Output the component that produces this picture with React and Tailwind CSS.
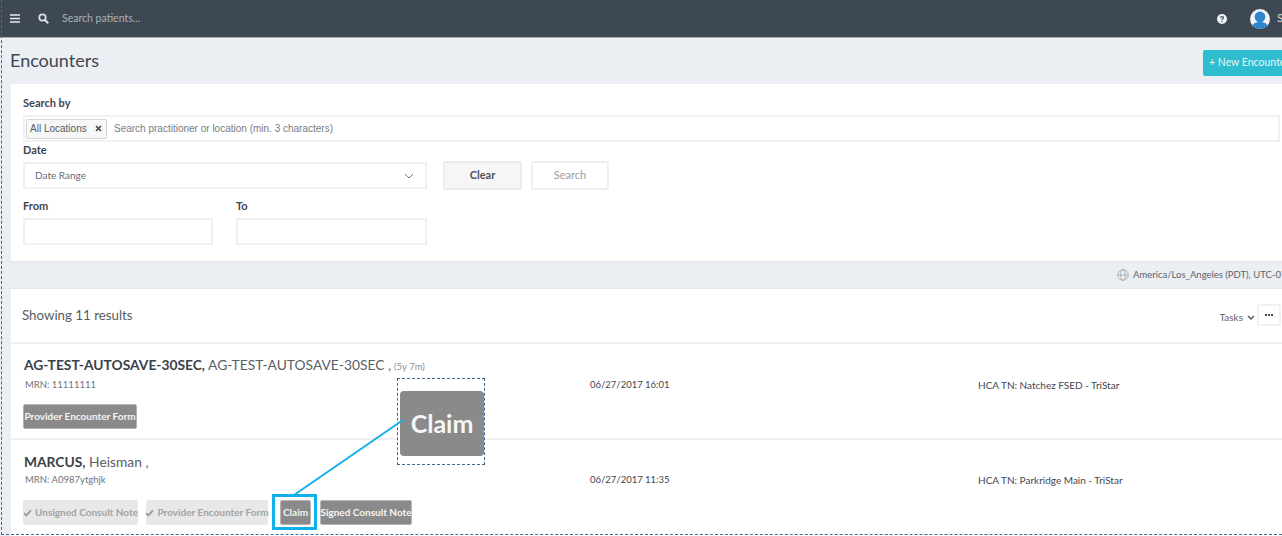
import React from "react";

const F = "font-['Lato','Liberation_Sans',sans-serif]";
const Label = ({ children, cls = "" }) => (
  <div className={`text-[11px] leading-[14px] font-bold text-[#3f4650] ${cls}`}>{children}</div>
);
const Field = ({ cls = "" }) => <div className={`h-[27px] bg-white border-2 border-[#eef0f4] ${cls}`} />;
const Check = () => (
  <svg width="9" height="8" viewBox="0 0 9 8" className="shrink-0">
    <path d="M1 4.2 L3.3 6.4 L8 1.4" fill="none" stroke="#9a9a9a" strokeWidth="1.8" />
  </svg>
);
const Tag = ({ children, cls = "" }) => (
  <div className={`h-[25px] flex items-center justify-center rounded-[2px] bg-[#8a8a8a] border border-[#b5b5b5] text-[#f4f4f4] text-[10px] font-bold whitespace-nowrap ${cls}`}>
    {children}
  </div>
);
const Done = ({ children, cls = "" }) => (
  <div className={`h-[25px] flex items-center justify-center gap-[3px] rounded-[2px] bg-[#e8e8e8] text-[#a3a3a3] text-[10px] font-bold whitespace-nowrap ${cls}`}>
    <Check />
    {children}
  </div>
);

const Row = ({ name, date, loc, mrn, cls, metaCls, children }) => (
  <div className={`border-t-2 border-[#eff0f3] pl-[13px] ${cls}`}>
    <div className="w-[566px]">{name}</div>
    <div className={`flex items-center h-[16px] ${metaCls}`}>
      <div className="w-[566px] shrink-0 pl-[1px] text-[9.5px] text-[#6f757c]">MRN: {mrn}</div>
      <div className="w-[388px] shrink-0 text-[9.5px] text-[#3f4650]">{date}</div>
      <div className="text-[10px] text-[#3f4650] whitespace-nowrap">{loc}</div>
    </div>
    {children}
  </div>
);

export default function App() {
  return (
    <div className={`relative w-[1282px] h-[536px] overflow-hidden bg-[#ebeef3] ${F}`}>
      <header className="h-[38px] bg-[#3e4853] border-b border-[#a9aeb4] flex items-center">
        <svg width="10" height="9" viewBox="0 0 10 9" className="ml-[10px]">
          <path d="M0 1h10M0 4.5h10M0 8h10" stroke="#e8ebee" strokeWidth="1.7" />
        </svg>
        <svg width="11" height="11" viewBox="0 0 11 11" className="ml-[18px]">
          <circle cx="4.5" cy="4.5" r="3.2" fill="none" stroke="#dfe3e7" strokeWidth="1.7" />
          <path d="M7 7l3.2 3.2" stroke="#dfe3e7" strokeWidth="2" />
        </svg>
        <span className="ml-[13px] text-[10.5px] text-[#aab1b8]">Search patients...</span>
        <div className="ml-auto flex items-center">
          <svg width="10" height="10" viewBox="0 0 10 10">
            <circle cx="5" cy="5" r="5" fill="#f1f3f5" />
            <path d="M3.5 3.8C3.6 2.2 6.6 2.3 6.5 3.8 6.4 4.9 5 4.9 5 6" fill="none" stroke="#3e4853" strokeWidth="1.2" />
            <rect x="4.4" y="6.8" width="1.2" height="1.3" fill="#3e4853" />
          </svg>
          <svg width="20" height="20" viewBox="0 0 20 20" className="ml-[23px]">
            <defs>
              <clipPath id="u"><circle cx="10" cy="10" r="10" /></clipPath>
            </defs>
            <circle cx="10" cy="10" r="10" fill="#f2f4f6" />
            <g clipPath="url(#u)">
              <circle cx="10" cy="8" r="5.4" fill="#2f86cf" />
              <path d="M1 20c1-6 5-7 9-7s8 1 9 7z" fill="#2f86cf" />
            </g>
          </svg>
          <span className="ml-[7px] w-[5px] overflow-hidden text-[11px] text-[#d5d9dd]">S</span>
        </div>
      </header>

      <div className="h-[46px] flex items-center justify-between pl-[10px]">
        <h1 className="text-[18px] leading-none mb-[3px] text-[#3f4650]">Encounters</h1>
        <div className="w-[79px] h-[26px] mt-[3px] overflow-hidden bg-[#2dbdce] rounded-l-[2px] pl-[6px] flex items-center text-[10.5px] text-[#e6f8fa] whitespace-nowrap">
          + New Encounter
        </div>
      </div>

      <section className="ml-[11px] h-[177px] bg-white pt-[12px] pl-[12px] pr-[2px]">
        <Label>Search by</Label>
        <div className="mt-[5px] h-[27px] border-2 border-[#eff1f4] flex items-center pl-[1px]">
          <div className="h-[20px] w-[81px] border border-[#d4d6d9] rounded-[2px] bg-[#f7f7f7] flex items-center pl-[3px] font-['Liberation_Sans',sans-serif] text-[10px] text-[#555b62] whitespace-nowrap">
            All Locations
            <svg width="7" height="7" viewBox="0 0 7 7" className="ml-[8px]">
              <path d="M1 1l5 5M6 1l-5 5" stroke="#3f4650" strokeWidth="1.6" />
            </svg>
          </div>
          <span className="ml-[7px] font-['Liberation_Sans',sans-serif] text-[10px] text-[#777c82]">
            Search practitioner or location (min. 3 characters)
          </span>
        </div>
        <Label cls="mt-[1px]">Date</Label>
        <div className="mt-[4px] flex items-start">
          <div className="w-[404px] h-[27px] mt-[1px] border-2 border-[#eef0f4] flex items-center justify-between pl-[10px] pr-[11px] text-[10px] text-[#666c73]">
            Date Range
            <svg width="10" height="6" viewBox="0 0 10 6">
              <path d="M1 1l4 4 4-4" fill="none" stroke="#777" strokeWidth="1" />
            </svg>
          </div>
          <div className="ml-[16px] w-[79px] h-[29px] bg-[#f6f6f6] border-2 border-[#ebecef] rounded-[2px] flex items-center justify-center text-[11px] font-bold text-[#4d535a]">
            Clear
          </div>
          <div className="ml-[9px] w-[78px] h-[29px] bg-white border-2 border-[#eff0f3] rounded-[2px] flex items-center justify-center text-[11px] text-[#9a9ea3]">
            Search
          </div>
        </div>
        <div className="mt-[9px] flex">
          <div className="w-[213px]">
            <Label>From</Label>
            <Field cls="mt-[5px] w-[190px]" />
          </div>
          <div className="w-[191px]">
            <Label>To</Label>
            <Field cls="mt-[5px] w-[191px]" />
          </div>
        </div>
      </section>

      <div className="h-[28px] flex items-center justify-end border-y border-[#e3e6ea] pl-[11px] text-[#5d646b] text-[9.5px] whitespace-nowrap">
        <svg width="12" height="12" viewBox="0 0 12 12" className="mr-[4px] shrink-0">
          <g fill="none" stroke="#a6abb1" strokeWidth="0.9">
            <circle cx="6" cy="6" r="5.3" />
            <ellipse cx="6" cy="6" rx="2.3" ry="5.3" />
            <path d="M0.7 6h10.6" />
          </g>
        </svg>
        <span className="w-[149px] overflow-hidden">America/Los_Angeles (PDT), UTC-07:00</span>
      </div>

      <section className="ml-[11px] h-[250px] bg-white">
        <div className="h-[53px] flex items-center pl-[11px]">
          <span className="text-[13.3px] text-[#565c63]">Showing 11 results</span>
          <div className="ml-auto flex items-center pb-[1px]">
            <span className="text-[10px] text-[#5d646b] mt-[4px]">Tasks</span>
            <svg width="8" height="6" viewBox="0 0 8 6" className="ml-[4px] mt-[5px]">
              <path d="M1 1l3 3 3-3" fill="none" stroke="#4d535a" strokeWidth="1.4" />
            </svg>
            <div className="ml-[2px] mr-[1px] w-[24px] h-[22px] bg-white border-2 border-[#f0f1f3] rounded-[2px] flex items-center justify-center gap-[1px]">
              <i className="w-[2px] h-[2px] bg-[#3f4650]" />
              <i className="w-[2px] h-[2px] bg-[#3f4650]" />
              <i className="w-[2px] h-[2px] bg-[#3f4650]" />
            </div>
          </div>
        </div>

        <Row
          cls="h-[96px] pt-[12px]"
          metaCls="mt-[1px]"
          mrn="11111111"
          date="06/27/2017 16:01"
          loc="HCA TN: Natchez FSED - TriStar"
          name={
            <div className="flex items-baseline text-[13.8px] leading-[18px] text-[#5a6067] whitespace-nowrap">
              <b className="font-bold text-[#3a4048]">AG-TEST-AUTOSAVE-30SEC,</b>
              <span className="ml-[3px]">AG-TEST-AUTOSAVE-30SEC ,</span>
              <span className="ml-[3px] text-[9.5px] text-[#8a8f95]">(5y 7m)</span>
            </div>
          }
        >
          <div className="mt-[11px] -ml-[1px]">
            <Tag cls="w-[114px]">Provider Encounter Form</Tag>
          </div>
        </Row>

        <Row
          cls="pt-[13px]"
          metaCls="mt-[1px]"
          mrn="A0987ytghjk"
          date="06/27/2017 11:35"
          loc="HCA TN: Parkridge Main - TriStar"
          name={
            <div className="text-[13.8px] leading-[18px] text-[#5a6067] whitespace-nowrap">
              <b className="font-bold text-[#3a4048]">MARCUS,</b> Heisman ,
            </div>
          }
        >
          <div className="mt-[12px] -ml-[1px] flex">
            <Done cls="w-[115px]">Unsigned Consult Note</Done>
            <Done cls="ml-[8px] w-[122px]">Provider Encounter Form</Done>
            <Tag cls="ml-[12px] w-[31px]">Claim</Tag>
            <Tag cls="ml-[9px] w-[92px]">Signed Consult Note</Tag>
          </div>
        </Row>
      </section>

      {/* annotation overlays */}
      <div className="absolute left-[1px] top-0 bottom-[1px] w-0 border-l border-dashed border-[#3f6a94]" />
      <div className="absolute left-[1px] right-0 bottom-[1px] h-0 border-b border-dashed border-[#3f6a94]" />
      <div className="absolute left-[397px] top-[378px] w-[88px] h-[87px] border border-dashed border-[#3f6a94] bg-white">
        <div className="ml-[2px] mt-[12px] w-[84px] h-[65px] rounded-[4px] bg-[#8a8a8a] flex items-center justify-center text-[#f6f6f6] text-[25px] font-bold">
          Claim
        </div>
      </div>
      <div className="absolute left-[272px] top-[494px] w-[45px] h-[36px] border-[3px] border-[#10b0ea]" />
      <svg className="absolute left-[290px] top-[415px]" width="120" height="82" viewBox="0 0 120 82">
        <path d="M4 80 L113 5" stroke="#10b0ea" strokeWidth="2" fill="none" />
      </svg>
    </div>
  );
}
